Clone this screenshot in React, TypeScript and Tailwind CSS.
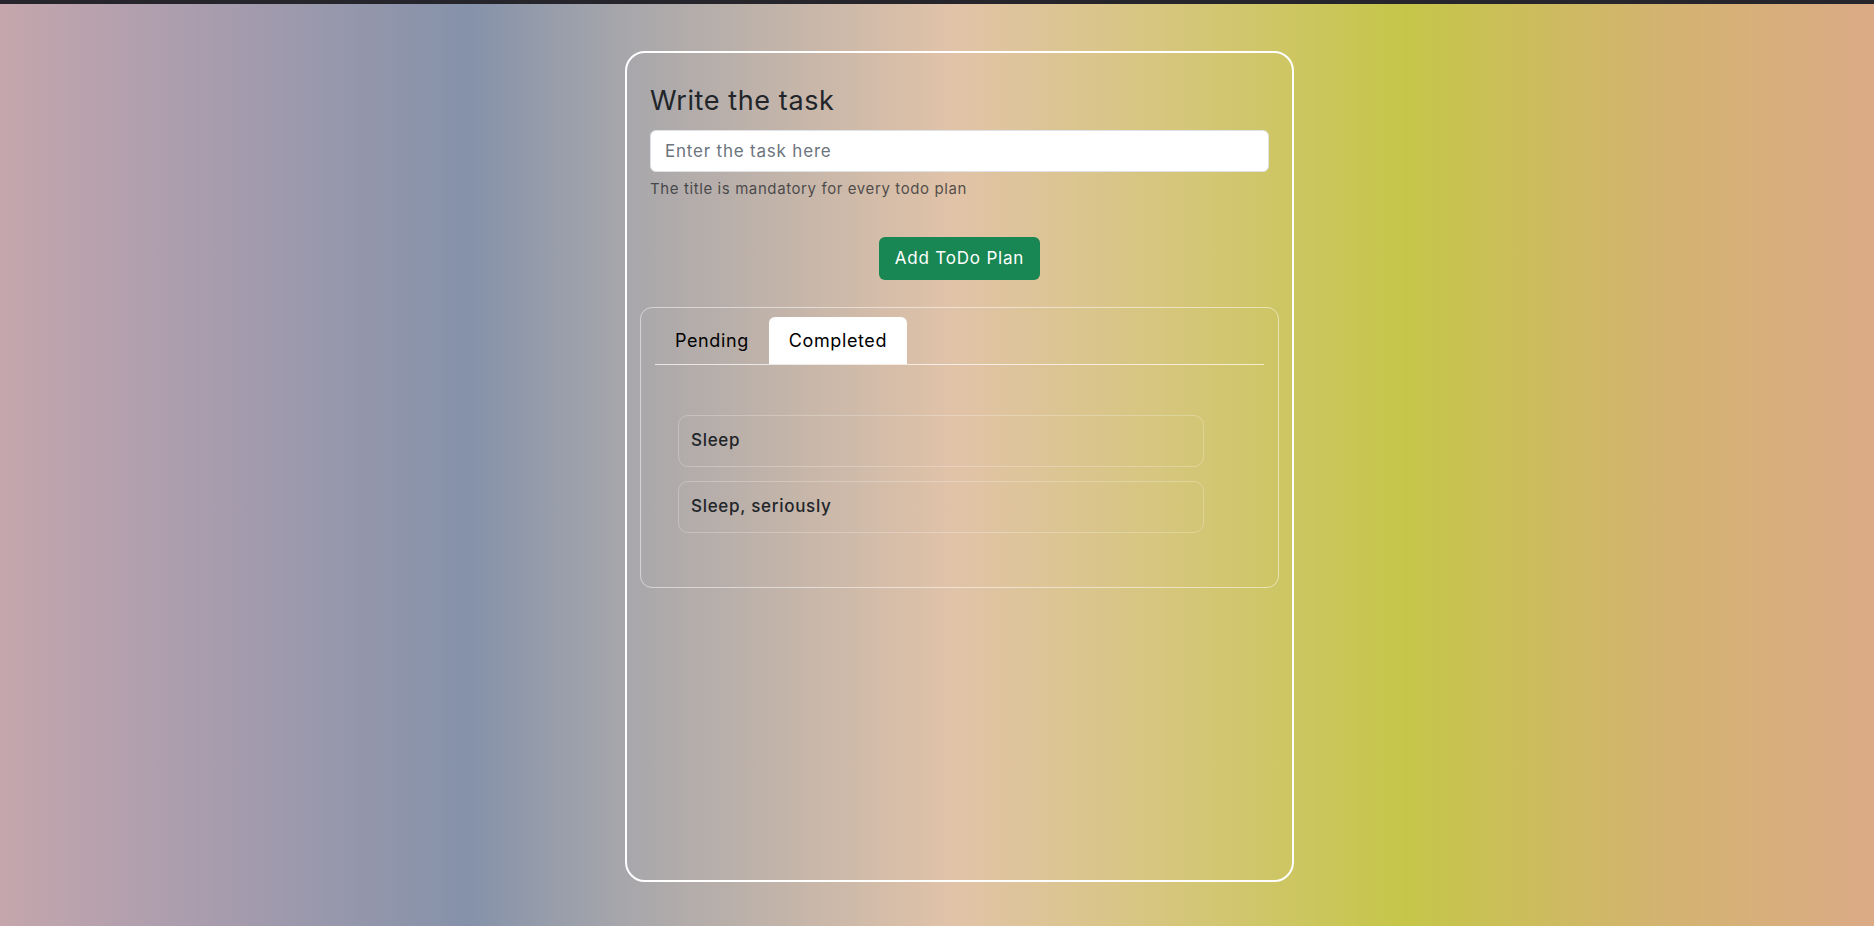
import React, { useState } from 'react';

const completed = ['Sleep', 'Sleep, seriously'];

export default function App() {
  const [tab, setTab] = useState<'pending' | 'completed'>('completed');

  return (
    <div className="min-h-screen font-['Inter',sans-serif] text-[#212529]">
      <div className="h-[4px] bg-[#26252b]" />
      <div className="min-h-[922px] bg-[linear-gradient(to_right,#c5a6ac_0%,#b09fae_8%,#8592aa_25%,#a6a6ab_33%,#e1c3a8_51%,#d6c67e_62%,#c5c649_75%,#d3b46f_88%,#dbaa86_100%)] flex justify-center pl-[45px] pt-[47px]">
        <div className="w-[669px] h-[831px] border-2 border-white rounded-[20px] px-[13px] pt-[31px]">
          <div className="px-[10px]">
            <h3 className="text-[27px] leading-[34px] font-normal tracking-[0.6px]">Write the task</h3>
            <input
              className="mt-[12px] w-full h-[42px] rounded-[6px] bg-white border border-[#dee2e6] px-[14px] text-[17px] tracking-[0.8px] outline-none placeholder:text-[#6c757d]"
              placeholder="Enter the task here"
            />
            <div className="mt-[6px] text-[15px] leading-[22px] text-[#212529]/75 tracking-[0.6px]">
              The title is mandatory for every todo plan
            </div>
          </div>
          <div className="flex justify-center mt-[37px]">
            <button className="h-[43px] px-[16px] rounded-[6px] bg-[#198754] text-white text-[17px] tracking-[0.8px]">
              Add ToDo Plan
            </button>
          </div>
          <div className="mt-[27px] border border-white/50 rounded-[12px] px-[14px] pt-[9px] pb-[54px]">
            <div className="flex border-b border-white/70">
              <button
                onClick={() => setTab('pending')}
                className={
                  tab === 'pending'
                    ? 'h-[47px] px-[20px] rounded-t-[6px] bg-white text-[18px] text-black tracking-[0.6px]'
                    : 'h-[47px] px-[20px] rounded-t-[6px] text-[18px] text-black tracking-[0.6px]'
                }
              >
                Pending
              </button>
              <button
                onClick={() => setTab('completed')}
                className={
                  tab === 'completed'
                    ? 'h-[47px] px-[20px] rounded-t-[6px] bg-white text-[18px] text-black tracking-[0.6px]'
                    : 'h-[47px] px-[20px] rounded-t-[6px] text-[18px] text-black tracking-[0.6px]'
                }
              >
                Completed
              </button>
            </div>
            <div className="pt-[50px] pl-[23px] flex flex-col gap-[14px]">
              {(tab === 'completed' ? completed : []).map((t) => (
                <div
                  key={t}
                  className="w-[526px] h-[52px] flex items-center px-[12px] rounded-[10px] border border-white/25 text-[17px] font-medium tracking-[0.7px] text-[#212529]"
                >
                  {t}
                </div>
              ))}
            </div>
          </div>
        </div>
      </div>
    </div>
  );
}
